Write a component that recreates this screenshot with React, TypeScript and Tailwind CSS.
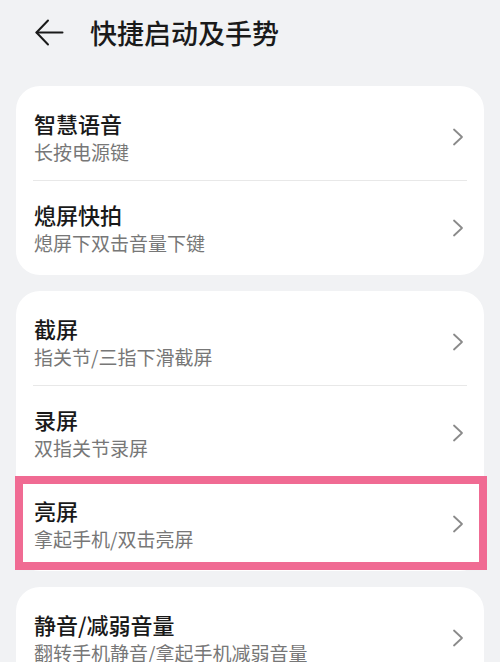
type Item = { title: string; desc: string; highlight?: boolean };

const groups: Item[][] = [
  [
    { title: "智慧语音", desc: "长按电源键" },
    { title: "熄屏快拍", desc: "熄屏下双击音量下键" },
  ],
  [
    { title: "截屏", desc: "指关节/三指下滑截屏" },
    { title: "录屏", desc: "双指关节录屏" },
    { title: "亮屏", desc: "拿起手机/双击亮屏", highlight: true },
  ],
  [{ title: "静音/减弱音量", desc: "翻转手机静音/拿起手机减弱音量" }],
];

function Chevron() {
  return (
    <svg
      className="w-[12px] h-[18px] mr-[2px] shrink-0"
      viewBox="0 0 12 18"
      fill="none"
      stroke="#8a8a8a"
      strokeWidth={1.8}
      strokeLinecap="round"
      strokeLinejoin="round"
    >
      <path d="M2 1.5 10 9 2 16.5" />
    </svg>
  );
}

function Row({ item }: { item: Item }) {
  return (
    <div className="relative flex items-center pl-[18px] pr-[18px] pt-[18px] pb-[14px]">
      <div className="flex-1 min-w-0">
        <div className="text-[22px] leading-[30px] font-medium text-[#191919]">{item.title}</div>
        <div className="text-[19px] leading-[28px] text-[#777777]">{item.desc}</div>
      </div>
      <Chevron />
      {item.highlight && (
        <div className="absolute -top-[1px] -bottom-[3px] -left-[1px] -right-[3px] border-[8px] border-[#f06b93] pointer-events-none" />
      )}
    </div>
  );
}

export default function App() {
  return (
    <div
      className="min-h-screen w-[500px] bg-[#f1f2f4]"
      style={{ fontFamily: '"Noto Sans CJK SC", "Noto Sans", sans-serif' }}
    >
      <header className="h-16 flex items-center">
        <svg
          className="ml-[35px] w-[29px] h-[27px]"
          viewBox="0 0 29 27"
          fill="none"
          stroke="#1a1a1a"
          strokeWidth={2}
          strokeLinecap="round"
          strokeLinejoin="round"
        >
          <path d="M13 1.5 1.5 13.5 13 25.5" />
          <path d="M1.5 13.5H27.5" />
        </svg>
        <h1 className="ml-[26px] text-[27px] leading-none font-medium text-[#1a1a1a]">快捷启动及手势</h1>
      </header>

      <div className="px-4 pt-[22px] flex flex-col gap-4">
        {groups.map((group, gi) => (
          <div key={gi} className="bg-white rounded-[24px] py-1">
            {group.map((item, i) => (
              <div key={item.title}>
                {i > 0 && <div className="mx-[17px] border-t border-[#e8e8e8]" />}
                <Row item={item} />
              </div>
            ))}
          </div>
        ))}
      </div>
    </div>
  );
}
